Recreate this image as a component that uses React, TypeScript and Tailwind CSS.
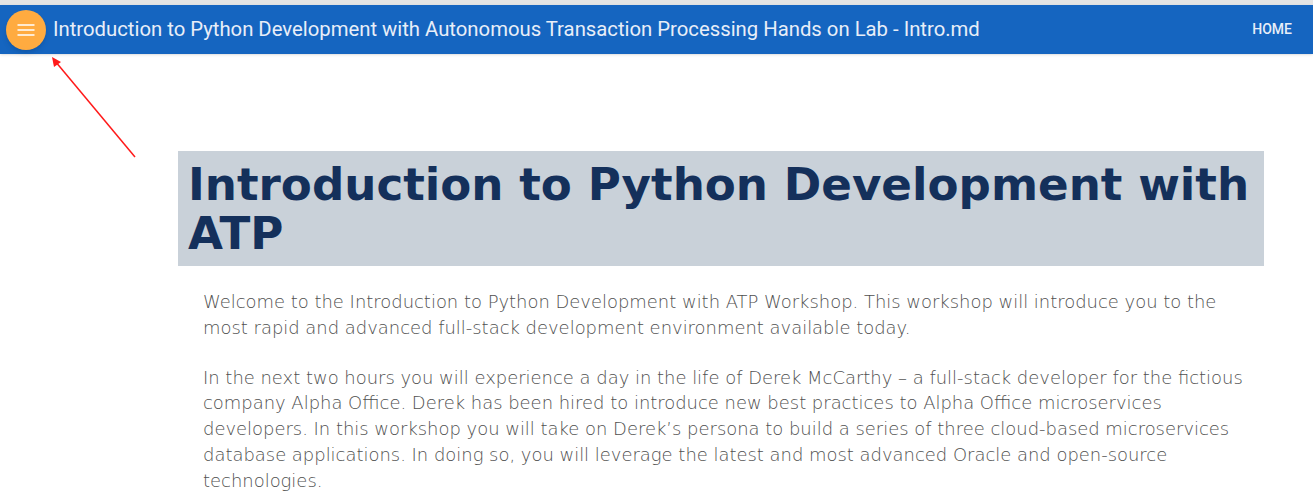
export default function App() {
  return (
    <div className="relative min-h-[499px] bg-white font-['Roboto',sans-serif]">
      {/* Browser strip */}
      <div className="h-[5px] bg-[#e4e4e4]" />

      {/* Header */}
      <header className="flex h-[49px] items-center bg-[#1565c0] pl-[6px] pr-[21px] shadow-sm">
        <button className="flex h-[40px] w-[40px] items-center justify-center rounded-full bg-[#ffab40] shadow-md">
          <svg width="18" height="12" viewBox="0 0 18 12" className="text-white">
            <path d="M0.5 1h17M0.5 6h17M0.5 11h17" stroke="currentColor" strokeWidth="1.5" />
          </svg>
        </button>
        <h1 className="ml-[7px] flex-1 text-[20.3px] leading-none text-[#e8eef8]">
          Introduction to Python Development with Autonomous Transaction Processing Hands on Lab - Intro.md
        </h1>
        <a className="text-[14px] font-medium uppercase text-[#e8eef8]">Home</a>
      </header>

      {/* Content */}
      <main className="ml-[178px] mt-[97px] w-[1086px] font-['DejaVu_Sans',sans-serif]">
        <div className="bg-[#c9d1d9] px-[10px] pb-[8px] pt-[9px]">
          <h2 className="text-[45.2px] font-bold leading-[49px] text-[#14305b]">
            Introduction to Python Development with ATP
          </h2>
        </div>
        <div className="pl-[25px] pr-[10px] pt-[23px] text-[17.95px] font-light leading-[25.8px] text-[#505050]">
          <p className="mb-[24px]">
            Welcome to the Introduction to Python Development with ATP Workshop. This workshop will introduce you to the
            most rapid and advanced full-stack development environment available today.
          </p>
          <p>
            In the next two hours you will experience a day in the life of Derek McCarthy – a full-stack developer for the
            fictious company Alpha Office. Derek has been hired to introduce new best practices to Alpha Office
            microservices developers. In this workshop you will take on Derek’s persona to build a series of three
            cloud-based microservices database applications. In doing so, you will leverage the latest and most advanced
            Oracle and open-source technologies.
          </p>
        </div>
      </main>

      {/* Annotation arrow */}
      <svg className="pointer-events-none absolute left-0 top-0" width="160" height="170" viewBox="0 0 160 170">
        <line x1="135" y1="157" x2="55" y2="61" stroke="#ff1a1a" strokeWidth="1.5" />
        <polygon points="52,57 54,67 61,62" fill="#ff1a1a" />
      </svg>
    </div>
  )
}
